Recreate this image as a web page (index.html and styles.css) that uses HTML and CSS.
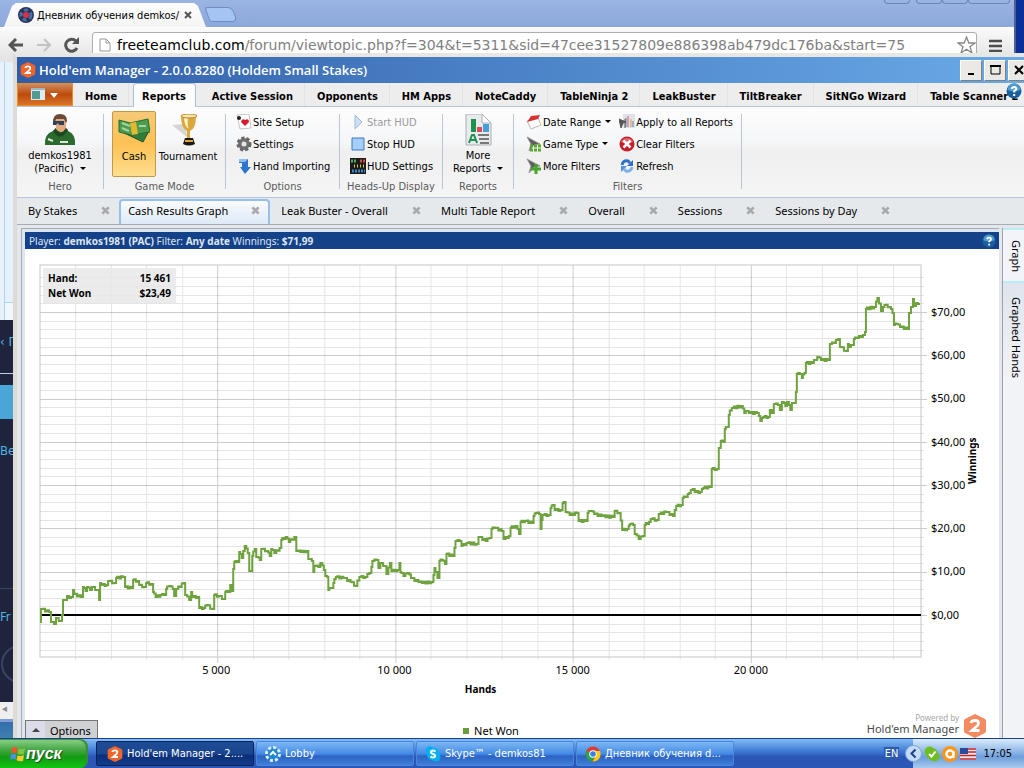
FILE: index.html
```html
<!DOCTYPE html>
<html lang="ru">
<head>
    <meta charset="UTF-8">
    <meta name="viewport" content="width=device-width, initial-scale=1.0">
    <title>Hold'em Manager</title>
    <link rel="stylesheet" href="styles.css">
</head>
<body>

<!-- Shared symbols -->
<svg class="defs" width="0" height="0" aria-hidden="true">
    <symbol id="hm-logo" viewBox="0 0 24 24">
        <path d="M12 0 L22 5 Q23 6 23 7 V17 Q23 18 22 19 L12 24 L2 19 Q1 18 1 17 V7 Q1 6 2 5 Z" fill="#f1642a"/>
        <path d="M8 9 Q8.500 6.500 12 6.500 Q15.500 6.500 15.500 9.300 Q15.500 11 13 13 L9 16.500 H16.500" fill="none" stroke="#fff" stroke-width="2.800"/>
    </symbol>
    <symbol id="help" viewBox="0 0 16 16">
        <circle cx="8" cy="8" r="7.500" fill="#1b5f9e"/>
        <path d="M1.500 7 A6.500 6.500 0 0 1 14.500 7 Q8 10 1.500 7" fill="#4f9bd0"/>
        <path d="M5.700 6 Q6 4 8.200 4 Q10.500 4.200 10.300 6 Q10 7.300 8.200 8.200 V9.500 M8.200 11 V13" fill="none" stroke="#fff" stroke-width="2"/>
    </symbol>
    <symbol id="close-x" viewBox="0 0 10 10">
        <path d="M1.500 1.500 L8.500 8.500 M8.500 1.500 L1.500 8.500" stroke="#a9a9a9" stroke-width="3"/>
    </symbol>
    <symbol id="funnel" viewBox="0 0 16 16">
        <path d="M1 1 L14 8 L8 9 L3 15 L5 8 Z" fill="#5d5d5d" stroke="#9a9a9a"/>
    </symbol>
</svg>

<main class="desktop">

    <!-- Browser window -->
    <section class="browser">
        <div class="tab-strip">
            <div class="browser-tab">
                <svg width="16" height="16" viewBox="0 0 16 16"><circle cx="8" cy="8" r="8" fill="#26365c"/><circle cx="8" cy="8" r="5" fill="none" stroke="#4d6ea5" stroke-width="3" stroke-dasharray="4 3"/><circle cx="8" cy="8" r="3" fill="#d8304f"/></svg>
                <span class="browser-tab-title">Дневник обучения demkos/</span>
                <button class="plain" aria-label="Close tab"><svg width="8" height="8" viewBox="0 0 8 8"><path d="M1 1 L7 7 M7 1 L1 7" stroke="#555" stroke-width="2"/></svg></button>
            </div>
            <button class="new-tab" aria-label="New tab"></button>
            <div class="browser-controls"><i></i><i></i><i></i><i></i></div>
        </div>
        <div class="toolbar">
            <button class="plain" aria-label="Back"><svg width="16" height="14" viewBox="0 0 16 14"><path d="M15 7 H2 M8 1 L2 7 L8 13" fill="none" stroke="#555" stroke-width="3"/></svg></button>
            <button class="plain" aria-label="Forward"><svg width="16" height="14" viewBox="0 0 16 14"><path d="M1 7 H14 M8 1 L14 7 L8 13" fill="none" stroke="#c2c2c2" stroke-width="2"/></svg></button>
            <button class="plain" aria-label="Reload"><svg width="16" height="16" viewBox="0 0 16 16"><path d="M13 11 A6 6 0 1 1 12 4" fill="none" stroke="#555" stroke-width="3"/><path d="M15 0 V7 H8 Z" fill="#555"/></svg></button>
            <div class="address">
                <svg width="12" height="14" viewBox="0 0 12 14"><path d="M1 1 H7 L11 5 V13 H1 Z M7 1 V5 H11" fill="#fff" stroke="#999"/></svg>
                <span class="url"><b>freeteamclub.com</b>/forum/viewtopic.php?f=304&amp;t=5311&amp;sid=47cee31527809e886398ab479dc176ba&amp;start=75</span>
                <svg width="19" height="18" viewBox="0 0 19 18"><path d="M9.500 1 L11.800 7 H18 L13 10.800 L15 17 L9.500 13.200 L4 17 L6 10.800 L1 7 H7.200 Z" fill="#fff" stroke="#888" stroke-width="1.300"/></svg>
            </div>
            <button class="plain" aria-label="Menu"><svg width="13" height="13" viewBox="0 0 13 13"><path d="M0 2 H13 M0 7 H13 M0 12 H13" stroke="#4d4d4d" stroke-width="2.600"/></svg></button>
        </div>
        <div class="page">
            <div class="page-top"></div>
            <div class="page-nav">‹ П</div>
            <div class="page-block"></div>
            <div class="page-text">Be</div>
            <div class="page-text page-low">Fr</div>
            <svg class="page-ring" width="40" height="40" viewBox="0 0 40 40"><circle cx="20" cy="20" r="18" fill="none" stroke="#3b4264" stroke-width="2"/></svg>
        </div>
        <div class="page-scroll">◂</div>
    </section>

    <!-- Hold'em Manager window -->
    <section class="hm">
        <header class="titlebar">
            <svg width="16" height="16"><use href="#hm-logo"/></svg>
            <h1>Hold'em Manager - 2.0.0.8280 (Holdem Small Stakes)</h1>
            <button class="win-btn" aria-label="Minimize"><svg width="12" height="12"><path d="M3 10 H9" stroke="#000" stroke-width="2"/></svg></button>
            <button class="win-btn" aria-label="Maximize"><svg width="12" height="12"><path d="M2 2 H11 V10 H2 Z" fill="none" stroke="#000"/><path d="M1 2 H12" stroke="#000" stroke-width="2"/></svg></button>
            <button class="win-btn" aria-label="Close"><svg width="12" height="12"><path d="M2 2 L10 10 M10 2 L2 10" stroke="#000" stroke-width="2"/></svg></button>
        </header>

        <nav class="ribbon-tabs">
            <button class="app-btn" aria-label="Application menu">
                <svg width="28" height="13" viewBox="0 0 28 13"><path d="M0 0 H14 V12 H0 Z" fill="#dfeaf0"/><path d="M1 3 H9 V11 H1 Z" fill="#4f9a93"/><path d="M0 1 H14" stroke="#9fb5c4" stroke-width="2"/><path d="M19 5 H27 L23 10 Z" fill="#fff"/></svg>
            </button>
            <a href="#">Home</a>
            <a href="#" class="active">Reports</a>
            <a href="#">Active Session</a>
            <a href="#">Opponents</a>
            <a href="#">HM Apps</a>
            <a href="#">NoteCaddy</a>
            <a href="#">TableNinja 2</a>
            <a href="#">LeakBuster</a>
            <a href="#">TiltBreaker</a>
            <a href="#">SitNGo Wizard</a>
            <a href="#">Table Scanner 2</a>
            <svg class="help-badge" width="16" height="16"><use href="#help"/></svg>
        </nav>

        <div class="ribbon">
            <div class="group">
                <button class="big">
                    <svg width="32" height="32" viewBox="0 0 32 32">
                        <path d="M1 31 Q0 20 9 17 L13 13 H21 L24 17 Q32 20 31 31 Z" fill="#2c6a2e"/>
                        <path d="M9 17 Q16 29 24 16 L21 13 H13 Z" fill="#1c4a20"/>
                        <path d="M11 4 H22 V14 Q17 22 12 15 Z" fill="#e2a982"/>
                        <path d="M9 8 Q9 0 16 0 Q23 0 23 7 L22 9 L20 5 H12 L11 9 Z" fill="#6b4a38"/>
                        <path d="M9 7 H20 V11 H15 L14 9 L12 11 H9 Z" fill="#2e4257"/>
                        <path d="M4 25 L9 27 M16 28 H24" stroke="#dfe8dc" stroke-width="2"/>
                    </svg>
                    <span>demkos1981<br>(Pacific) <i class="caret"></i></span>
                </button>
                <h2>Hero</h2>
            </div>
            <div class="group">
                <div class="pair">
                    <button class="big picked">
                        <svg width="32" height="32" viewBox="0 0 32 32">
                            <path d="M2 17 L25 13 L31 17 L25 28 Z" fill="#2f7d38" stroke="#1e5526"/>
                            <path d="M1 6 L12 9 L30 5 L32 18 L13 21 L1 18 Z" fill="#4b9b50" stroke="#256c2d"/>
                            <path d="M4 9 L12 12 M4 14 L11 17 M21 12 H28" stroke="#a5d6a0" stroke-width="2"/>
                            <path d="M12 9 L18 8 L20 20 L14 21 Z" fill="#e5b72f"/>
                        </svg>
                        <span>Cash</span>
                    </button>
                    <button class="big">
                        <svg width="32" height="32" viewBox="0 0 32 32">
                            <path d="M0 11 L12 10 L16 24 Z" fill="#d6d6d6"/>
                            <path d="M9 2 H24 Q24 15 18 17 V24 H15 V17 Q9 14 9 2 Z" fill="#d9a93f"/>
                            <path d="M12 3 H16 Q15 12 17 15 Q12 12 12 3 Z" fill="#fff2c0"/>
                            <ellipse cx="17" cy="2" rx="8" ry="2" fill="#f8e7ad" stroke="#b6862b"/>
                            <path d="M13 24 H21 L23 30 Q17 33 11 30 Z" fill="#1d1710"/><path d="M13 27 H21" stroke="#d9a93f" stroke-width="2"/>
                        </svg>
                        <span>Tournament</span>
                    </button>
                </div>
                <h2>Game Mode</h2>
            </div>
            <div class="group">
                <div class="stack">
                    <button class="small"><svg width="16" height="16" viewBox="0 0 16 16"><path d="M1 1 L13 0 L15 14 L4 15 Z" fill="#fff" stroke="#c5c5c5"/><path d="M9 12 L5 8 Q6 4 9 6 Q13 4 13 8 Z" fill="#d8182a"/><circle cx="3" cy="4" r="2" fill="#222"/></svg>Site Setup</button>
                    <button class="small"><svg width="16" height="16" viewBox="0 0 16 16"><circle cx="8" cy="8" r="6" fill="#777" stroke="#666" stroke-width="3" stroke-dasharray="3 2"/><circle cx="8" cy="8" r="5" fill="#6f6f6f"/><circle cx="8" cy="8" r="2.500" fill="#e6e6e6"/></svg>Settings</button>
                    <button class="small"><svg width="16" height="16" viewBox="0 0 16 16"><path d="M3 1 H12 V9 H15 L9 16 L4 9 H6 V5 H3 Z" fill="#2f74cf"/><path d="M3 1 H12 L9 4 H3 Z" fill="#8fbdf0"/></svg>Hand Importing</button>
                </div>
                <h2>Options</h2>
            </div>
            <div class="group">
                <div class="stack">
                    <button class="small" disabled><svg width="16" height="16" viewBox="0 0 16 16"><path d="M5 1 L12 8 L5 15 Z" fill="#cfe0f3" stroke="#9cbce0"/></svg>Start HUD</button>
                    <button class="small"><svg width="16" height="16" viewBox="0 0 16 16"><path d="M2 2 H14 V14 H2 Z" fill="#a5cff8" stroke="#3d78bb"/></svg>Stop HUD</button>
                    <button class="small"><svg width="16" height="16" viewBox="0 0 16 16"><path d="M0 0 H16 V16 H0 Z" fill="#1b1b1b"/><path d="M1 3 H7" stroke="#4fae55" stroke-width="3" stroke-dasharray="2 1"/><path d="M10 3 H15" stroke="#d8434b" stroke-width="3" stroke-dasharray="2 1"/><path d="M4 8 H14" stroke="#d8c73e" stroke-width="3" stroke-dasharray="1 2"/><path d="M2 13 H15" stroke="#3786c5" stroke-width="3" stroke-dasharray="2 1"/></svg>HUD Settings</button>
                </div>
                <h2>Heads-Up Display</h2>
            </div>
            <div class="group">
                <button class="big">
                    <svg width="32" height="32" viewBox="0 0 32 32">
                        <path d="M4 0 H20 L29 9 V31 H4 Z" fill="#e8ebec" stroke="#a9b0b3"/>
                        <path d="M20 0 V9 H29 Z" fill="#fff" stroke="#a9b0b3"/>
                        <path d="M9 5 H14 V18 H9 Z" fill="#1f9050"/><path d="M15 13 H20 V18 H15 Z" fill="#dd4b52"/><path d="M21 10 H27 V18 H21 Z" fill="#4a9bd9"/>
                        <path d="M7 29 L10 21 H12 L15 29 M9 26 H13" fill="none" stroke="#1f9050" stroke-width="2"/>
                        <path d="M16 21 H27 M17 25 H27 M18 29 H27" stroke="#777" stroke-width="2"/>
                    </svg>
                    <span>More<br>Reports <i class="caret"></i></span>
                </button>
                <h2>Reports</h2>
            </div>
            <div class="group">
                <div class="pair filters">
                    <div class="stack">
                        <button class="small"><svg width="16" height="16" viewBox="0 0 16 16"><path d="M1 7 L12 4 L15 11 L5 15 Z" fill="#fff" stroke="#b9b9b9"/><path d="M1 8 L5 2 L14 1 L12 5 Z" fill="#d93232"/></svg>Date Range <i class="caret"></i></button>
                        <button class="small"><svg width="16" height="16"><use href="#funnel"/><path d="M4 10 H16 M4 14 H16" stroke="#5aa832" stroke-width="3" stroke-dasharray="3 1"/></svg>Game Type <i class="caret"></i></button>
                        <button class="small"><svg width="16" height="16"><use href="#funnel"/><path d="M10 6 V16 M5 11 H15" stroke="#47a72c" stroke-width="3"/></svg>More Filters</button>
                    </div>
                    <div class="stack">
                        <button class="small"><svg width="16" height="16" viewBox="0 0 16 16"><path d="M4 0 H16 V14 H4 Z" fill="#dfe3e8"/><path d="M7 4 V13 M14 7 V13" stroke="#5b7fb8"/><path d="M9 2 V13" stroke="#d8555c"/><path d="M12 5 V13" stroke="#d8a13c"/><path d="M0 5 L7 8 L4 9 L2 14 Z M6 5 V14" fill="#555" stroke="#555"/></svg>Apply to all Reports</button>
                        <button class="small"><svg width="16" height="16" viewBox="0 0 16 16"><circle cx="8" cy="8" r="7.500" fill="#c61e28"/><path d="M2 6 A6.500 6.500 0 0 1 14 6 Q8 9 2 6" fill="#e0626a"/><path d="M4.500 4.500 L11.500 11.500 M11.500 4.500 L4.500 11.500" stroke="#fff" stroke-width="2.500"/></svg>Clear Filters</button>
                        <button class="small"><svg width="16" height="16" viewBox="0 0 16 16"><path d="M3 7 Q4 2 9 3 L11 5" fill="none" stroke="#2f6fca" stroke-width="3"/><path d="M14 2 V8 H8 Z" fill="#2f6fca"/><path d="M13 9 Q12 14 7 13 L5 11" fill="none" stroke="#7fb0ea" stroke-width="3"/><path d="M2 14 V8 H8 Z" fill="#5390dc"/></svg>Refresh</button>
                    </div>
                </div>
                <h2>Filters</h2>
            </div>
        </div>

        <nav class="doc-tabs">
            <div class="doc-tab"><a href="#">By Stakes</a><button class="plain" aria-label="Close"><svg width="9" height="9"><use href="#close-x"/></svg></button></div>
            <div class="doc-tab current"><a href="#">Cash Results Graph</a><button class="plain" aria-label="Close"><svg width="9" height="9"><use href="#close-x"/></svg></button></div>
            <div class="doc-tab"><a href="#">Leak Buster - Overall</a><button class="plain" aria-label="Close"><svg width="9" height="9"><use href="#close-x"/></svg></button></div>
            <div class="doc-tab"><a href="#">Multi Table Report</a><button class="plain" aria-label="Close"><svg width="9" height="9"><use href="#close-x"/></svg></button></div>
            <div class="doc-tab"><a href="#">Overall</a><button class="plain" aria-label="Close"><svg width="9" height="9"><use href="#close-x"/></svg></button></div>
            <div class="doc-tab"><a href="#">Sessions</a><button class="plain" aria-label="Close"><svg width="9" height="9"><use href="#close-x"/></svg></button></div>
            <div class="doc-tab"><a href="#">Sessions by Day</a><button class="plain" aria-label="Close"><svg width="9" height="9"><use href="#close-x"/></svg></button></div>
        </nav>

        <div class="workspace">
            <article class="report">
                <div class="filter-bar">
                    <p>Player: <b>demkos1981 (PAC)</b> Filter: <b>Any date</b> Winnings: <b>$71,99</b></p>
                    <svg width="14" height="14" viewBox="0 0 16 16"><use href="#help" width="16" height="16"/></svg>
                </div>
                <div class="chart">
                    <div class="plot">
                        <svg id="plot" viewBox="40 265 880 392" preserveAspectRatio="none"></svg>
                        <dl class="readout">
                            <dt>Hand:</dt><dd>15 461</dd>
                            <dt>Net Won</dt><dd>$23,49</dd>
                        </dl>
                    </div>
                    <div class="y-axis">
                        <span></span><span>$70,00</span><span>$60,00</span><span>$50,00</span><span>$40,00</span><span>$30,00</span><span>$20,00</span><span>$10,00</span><span>$0,00</span>
                    </div>
                    <div class="y-title">Winnings</div>
                    <div class="x-axis"><span></span><span>5 000</span><span>10 000</span><span>15 000</span><span>20 000</span></div>
                    <div class="x-title">Hands</div>
                </div>
                <footer class="report-foot">
                    <button class="options"><i><svg width="8" height="4"><path d="M0 4 L4 0 L8 4 Z" fill="#444"/></svg></i><span>Options</span></button>
                    <div class="legend"><i></i>Net Won</div>
                    <div class="powered">
                        <p><small>Powered by</small>Hold'em Manager</p>
                        <svg width="24" height="24" opacity="0.750"><use href="#hm-logo"/></svg>
                    </div>
                </footer>
            </article>
            <nav class="side-tabs">
                <a href="#" class="on">Graph</a>
                <a href="#">Graphed Hands</a>
            </nav>
        </div>
    </section>
</main>

<footer class="taskbar">
    <button class="start">
        <svg width="16" height="16" viewBox="0 0 16 16"><path d="M2 2 Q5 0 7.500 2 L6.500 7.500 Q4 6 1 7 Z" fill="#f0562b"/><path d="M8.500 2.500 Q12 4 15 2 L14 8 Q11 9 7.500 8 Z" fill="#83c441"/><path d="M1 8.500 Q4 7 6.500 9 L5.500 14 Q3 12 0 13.500 Z" fill="#4a8fe8"/><path d="M7.500 9.500 Q11 10.500 14 9 L13 15 Q9 16 6.500 14 Z" fill="#fbc92e"/></svg>
        пуск
    </button>
    <button class="task pressed"><svg width="16" height="16"><use href="#hm-logo"/></svg>Hold'em Manager - 2....</button>
    <button class="task"><svg width="16" height="16" viewBox="0 0 16 16"><circle cx="8" cy="8" r="6.500" fill="#1f86cf" stroke="#d7efff" stroke-width="3" stroke-dasharray="3 2"/><circle cx="8" cy="8" r="5" fill="#1f86cf"/><path d="M5 9 L8 6 L11 9" fill="none" stroke="#fff" stroke-width="2"/></svg>Lobby</button>
    <button class="task"><svg width="16" height="16" viewBox="0 0 16 16"><circle cx="5" cy="5" r="4.500" fill="#00aff0"/><circle cx="11" cy="11" r="4.500" fill="#00aff0"/><circle cx="8" cy="8" r="6.500" fill="#00aff0"/><path d="M10.500 5.500 Q8 3.500 6 5.500 Q5.500 7.200 8 8 Q11 9 10 10.700 Q8 12.500 5.500 10.500" fill="none" stroke="#fff" stroke-width="2"/></svg>Skype™ - demkos81</button>
    <button class="task"><svg width="16" height="16" viewBox="0 0 16 16"><circle cx="8" cy="8" r="7.500" fill="#e03c31"/><path d="M1.500 4.500 A7.500 7.500 0 0 0 7 15.500 L11 9 L8 8 Z" fill="#2ba24c"/><path d="M15 5 H8 L11 10 L7.500 15.500 A7.500 7.500 0 0 0 15 5" fill="#fbc814"/><circle cx="8" cy="8" r="3.800" fill="#fff"/><circle cx="8" cy="8" r="2.800" fill="#3b7de0"/></svg>Дневник обучения d...</button>
    <span class="lang">EN</span>
    <div class="tray">
        <svg width="17" height="17" viewBox="0 0 17 17"><circle cx="8.500" cy="8.500" r="8" fill="#c4daf6" stroke="#7ba4d8"/><path d="M10.500 4.500 L6.500 8.500 L10.500 12.500" fill="none" stroke="#1f3f80" stroke-width="2"/></svg>
        <svg width="16" height="16" viewBox="0 0 16 16"><circle cx="5.500" cy="5.500" r="5" fill="#6fbe20"/><circle cx="10.500" cy="10.500" r="5" fill="#6fbe20"/><circle cx="8" cy="8" r="6" fill="#6fbe20"/><path d="M5 8 L7.500 10.500 L11.500 5.500" fill="none" stroke="#fff" stroke-width="2"/></svg>
        <svg width="16" height="16" viewBox="0 0 16 16"><circle cx="8" cy="8" r="8" fill="#f7951d"/><circle cx="8" cy="8" r="3.500" fill="none" stroke="#fff" stroke-width="2.400"/><path d="M11.500 5 V12" stroke="#fff" stroke-width="2"/></svg>
        <svg width="16" height="12" viewBox="0 0 16 12"><path d="M0 0 H16 V12 H0 Z" fill="#f2e6e6"/><path d="M0 1 H16 M0 4 H16 M0 7.500 H16 M0 11 H16" stroke="#c3262f" stroke-width="1.700"/><path d="M0 0 H8 V6 H0 Z" fill="#2b4a9b"/></svg>
        <time>17:05</time>
    </div>
</footer>

<script>
    const svg = document.getElementById('plot');
    const left = 40, right = 920, top_ = 265, bottom = 657, zero = 615;
    const perTwo = 8.66;       // height of $2
    const perThousand = 35.5;  // width of 1 000 hands

    // x,y of each turn in the winnings line
    const turns = `41,623 41,612 43,609 51,612 52,622 56,624 57,618 62,621 63,615 63,602 67,600 67,597 73,597 74,590 75,594 83,597 84,587 87,591 88,587 92,590 93,587 99,590 100,600 101,583 103,585 108,585 110,581 116,583 117,578 125,577 126,587 133,588 134,580 139,581 140,585 146,587 147,583 153,584 154,592 157,597 162,595 166,595 167,589 171,586 174,589 176,596 178,589 185,583 187,595 191,600 192,592 194,597 199,597 200,608 205,608 208,605 214,609 215,595 220,596 225,599 226,592 230,592 232,585 233,591 234,569 235,562 239,562 240,552 243,558 246,546 249,553 250,571 252,571 253,556 256,549 258,557 261,560 263,549 268,551 271,556 272,549 276,553 281,548 282,540 287,537 290,542 296,537 298,551 302,552 308,551 310,559 313,561 314,572 316,566 320,567 322,563 325,570 327,576 328,577 329,590 333,588 334,583 337,577 345,578 352,582
        357,586 361,577 367,577 371,573 372,567 374,561 378,560 380,568 381,563 386,566 388,574 391,563 393,571 399,570 400,563 401,572 405,576 409,573 412,578 420,582 423,583 433,582 434,575 435,568 439,578 440,561 443,560 446,564 447,554 454,556 455,548 457,541 461,541 462,546 468,543 478,544 480,537 487,541 491,538 492,529 496,528 503,531 505,539 510,536 511,528 517,526 520,534 521,522 526,521 533,523 534,516 537,513 540,514 541,529 542,520 544,515 550,515 551,508 554,505 556,510 562,510 563,503 565,502 567,512 571,515 578,513 579,521 587,521 588,513 592,511 595,514 603,516 614,517 615,511 620,513 623,530 628,529 631,524 634,525 636,534 640,539 644,536 645,525 650,522 652,519 658,520 660,514
        667,512 674,516 677,506 682,505 683,498 687,497 690,493 694,489 696,492 701,492 704,488 711,487 712,469 718,469 720,448 721,441 724,442 725,429 728,427 729,415 733,408 742,406 745,413 748,411 750,413 758,413 761,421 764,417 769,417 771,410 773,413 775,404 779,405 781,410 783,402 786,406 788,402 791,410 793,403 795,403 796,392 797,374 801,374 802,378 805,373 806,363 813,363 818,357 822,360 829,360 831,344 835,343 839,339 841,347 847,351 848,344 850,347 853,345 854,339 858,338 864,335 865,332 866,309 875,307 878,298 882,311 885,305 890,307 893,313 894,325 897,324 901,327 908,329 910,313 912,307 913,299 915,306 917,303 919,304`;

    function addPath(d, cls) {
        const path = document.createElementNS('http://www.w3.org/2000/svg', 'path');
        path.setAttribute('d', d);
        path.setAttribute('class', cls);
        svg.appendChild(path);
    }

    let minor = '', major = '';
    for (let i = -4; i < 40; i++) {
        const y = Math.round(zero - i * perTwo) + 0.5;
        if (i % 5 === 0) {
            major += `M${left} ${y} H${right + 6}`;
        } else {
            minor += `M${left} ${y} H${right + 3}`;
        }
    }
    for (let i = 1; i < 25; i++) {
        const x = Math.floor(left + i * perThousand) + 0.5;
        if (i % 5 === 0) {
            major += `M${x} ${top_} V${bottom + 6}`;
        } else {
            minor += `M${x} ${top_} V${bottom + 3}`;
        }
    }
    addPath(minor, 'grid-minor');
    addPath(major, 'grid-major');
    addPath(`M${left} ${top_} H${right} V${bottom} H${left} Z`, 'grid-frame');
    addPath(`M${left} ${zero} H${right}`, 'zero-line');

    let line = '';
    turns.split(/\s+/).forEach((turn, i, all) => {
        const [x, y] = turn.split(',').map(Number);
        if (i === 0) {
            line = `M${x} ${y}`;
            return;
        }
        const [px, py] = all[i - 1].split(',').map(Number);
        const steps = Math.max(1, Math.round((x - px) / 2));
        for (let s = 1; s <= steps; s++) {
            const wobble = s < steps ? (s % 2 ? -1 : 1) : 0;
            line += ` V${py + (y - py) * s / steps + wobble} H${px + (x - px) * s / steps}`;
        }
    });
    addPath(line, 'series');
</script>

</body>
</html>
```
FILE: styles.css
```css
* {
    box-sizing: border-box;
}
body {
    margin: 0;
    height: 100vh;
    display: flex;
    flex-direction: column;
    overflow: hidden;
    font-family: "DejaVu Sans Condensed", "Open Sans", sans-serif;
    font-size: 11px;
    color: #000;
}
button {
    font: inherit;
    color: inherit;
    padding: 0;
    border: none;
    background: none;
}
a {
    color: inherit;
    text-decoration: none;
}
h1, h2, p, dl, dd {
    margin: 0;
}
svg {
    flex: none;
    display: block;
}
.defs {
    position: absolute;
}
.plain {
    display: flex;
}
.desktop {
    position: relative;
    flex: 1;
    min-height: 0;
    overflow: hidden;
    background: linear-gradient(#0a2f96 0 90%, #3f7fb0);
}

/* Browser */
.browser {
    position: absolute;
    top: 0;
    left: 0;
    right: 8px;
    bottom: 16px;
    display: flex;
    flex-direction: column;
    border-right: 2px solid #4b5f92;
    border-bottom: 3px solid #7f9bd8;
    background: linear-gradient(#9ab4e3, #8ca7da 27px);
}
.tab-strip {
    display: flex;
    align-items: flex-start;
    height: 27px;
    padding-left: 4px;
}
.browser-tab {
    display: flex;
    align-items: center;
    gap: 3px;
    width: 202px;
    height: 24px;
    margin-top: 3px;
    padding: 0 14px 0 14px;
    clip-path: polygon(0 100%, 8px 3px, 12px 0, 190px 0, 194px 3px, 100% 100%);
    background: linear-gradient(#fff, #f4f4f4);
}
.browser-tab-title {
    flex: 1;
    white-space: nowrap;
}
.new-tab {
    width: 28px;
    height: 15px;
    margin: 7px 0 0 1px;
    border: 1px solid #6f8fc4;
    border-radius: 3px 5px 5px 3px;
    background: #a5c3f3;
    transform: skewX(20deg);
}
.browser-controls {
    display: flex;
    margin-left: auto;
    margin-right: 4px;
}
.browser-controls i {
    width: 26px;
    height: 4px;
    border: 1px solid #7185b0;
    border-top: none;
    border-radius: 0 0 4px 4px;
}
.browser-controls i:first-child {
    margin-right: 6px;
}
.browser-controls i:last-child {
    width: 42px;
}
.toolbar {
    display: flex;
    align-items: center;
    gap: 12px;
    height: 35px;
    padding: 0 12px 0 8px;
    border-top: 1px solid #fff;
    background: linear-gradient(#fafafa, #e2e2e2);
}
.address {
    flex: 1;
    min-width: 0;
    display: flex;
    align-items: center;
    gap: 6px;
    height: 27px;
    padding: 0 0 0 6px;
    border: 1px solid #adadad;
    border-radius: 3px;
    background: #fff;
}
.url {
    flex: 1;
    font-family: "DejaVu Sans", sans-serif;
    font-size: 14px;
    white-space: nowrap;
    overflow: hidden;
    color: #808080;
}
.url b {
    font-weight: normal;
    color: #000;
}
.page {
    flex: 1;
    min-height: 0;
    overflow: hidden;
    background: #1f243d;
    color: #4fb4e0;
    font-size: 13px;
}
.page-top {
    height: 258px;
    margin-left: 4px;
    border-left: 1px solid #a9d6f5;
    background: linear-gradient(#e6f1fb 240px, #a9d6f5 240px 241px, #f1f7fd 241px);
    box-shadow: -4px 0 #e6f1fb;
}
.page-nav {
    height: 54px;
    padding-top: 14px;
    border-bottom: 1px solid #bcd0e6;
}
.page-block {
    width: 60px;
    height: 34px;
    margin: 11px 0 24px;
    background: #4ba6d8;
}
.page-text {
    margin-bottom: 130px;
}
.page-low {
    margin-bottom: 20px;
    padding-top: 20px;
    border-top: 1px solid #3b4264;
}
.page-scroll {
    height: 17px;
    padding-left: 2px;
    background: #efefef;
    color: #888;
}

/* Hold'em Manager window */
.hm {
    position: absolute;
    top: 53px;
    left: 13px;
    right: -8px;
    bottom: 0;
    display: flex;
    flex-direction: column;
    border-top: 4px solid #e9e7e2;
    border-left: 4px solid #dedbd5;
    background: #eceef2;
}
.titlebar {
    display: flex;
    align-items: center;
    gap: 2px;
    height: 26px;
    padding: 0 2px 0 3px;
    background: linear-gradient(90deg, #2f5da8, #6aaae8);
    color: #fff;
}
.titlebar h1 {
    flex: 1;
    padding-left: 1px;
    font-family: "Open Sans", sans-serif;
    font-size: 13px;
    font-weight: 600;
    white-space: nowrap;
}
.win-btn {
    display: grid;
    place-items: center;
    width: 22px;
    height: 21px;
    border: 1px solid;
    border-color: #fff #808080 #808080 #fff;
    background: #ece9e4;
}
.ribbon-tabs {
    position: relative;
    display: flex;
    height: 24px;
    border-bottom: 1px solid #b5c6dc;
    background: #ededed;
}
.ribbon-tabs a {
    padding: 7px 11px 0 12px;
    border-right: 1px solid #e0e3e8;
    font-weight: bold;
    white-space: nowrap;
}
.ribbon-tabs .active {
    padding: 6px 9px 0 8px;
    margin: 0 4px -1px 4px;
    border: 1px solid #a9c0dd;
    border-bottom: none;
    border-radius: 4px 4px 0 0;
    background: #fcfcfd;
}
.app-btn {
    flex: none;
    display: grid;
    place-items: center;
    width: 56px;
    height: 23px;
    border: 1px solid #ef8a1c;
    background: linear-gradient(#d08a5c, #bd4c0b 50%, #d8742c);
}
.help-badge {
    position: absolute;
    top: 0;
    right: 10px;
}
.ribbon {
    display: grid;
    grid-template-columns: 87px 122px 114px 103px 71px 228px;
    height: 90px;
    padding-top: 4px;
    background: linear-gradient(#fdfdfe, #f5f6f7 40%, #efeff0 50%, #f5f5f6);
}
.group {
    display: flex;
    flex-direction: column;
    align-items: center;
    margin: 3px 0 8px;
    border-right: 1px solid #b7c6d8;
    white-space: nowrap;
}
.group h2 {
    margin: auto 0 -4px;
    font-size: 11px;
    font-weight: normal;
    line-height: 13px;
    color: #5b5b5b;
}
.pair, .stack {
    display: flex;
}
.stack {
    flex-direction: column;
    gap: 6px;
    align-self: flex-start;
    padding-left: 10px;
}
.filters .stack {
    padding-left: 12px;
}
.filters .stack + .stack {
    padding-left: 8px;
}
.pair {
    align-self: flex-start;
}
.big {
    display: flex;
    flex-direction: column;
    align-items: center;
    gap: 3px;
    line-height: 13px;
}
.pair .big {
    gap: 4px;
    width: 62px;
}
.pair .picked {
    width: 44px;
    height: 66px;
    margin: -3px 1px 0 8px;
    padding-top: 2px;
    border: 1px solid #c19a45;
    border-radius: 2px;
    background: linear-gradient(#f6c877, #fdc155 50%, #fedf90);
}
.small {
    display: flex;
    align-items: center;
    gap: 1px;
    height: 16px;
}
.small:disabled {
    color: #9a9a9a;
}
.caret {
    display: inline-block;
    margin: 0 0 2px 3px;
    border: 3px solid transparent;
    border-top-color: #000;
    border-bottom: none;
}
.doc-tabs {
    display: flex;
    height: 28px;
    padding-top: 1px;
    border-top: 1px solid #b5c6dc;
    border-bottom: 1px solid #a8adb3;
    background: #e6e9ec;
    font-family: "Noto Sans", sans-serif;
}
.doc-tab {
    display: flex;
    align-items: center;
    gap: 24px;
    padding: 0 9px 2px 11px;
    white-space: nowrap;
}
.current {
    gap: 23px;
    padding: 0 8px 4px 7px;
    border: 2px solid #94c1ec;
    border-bottom: none;
    border-radius: 4px 4px 0 0;
    background: linear-gradient(#f9fbfe, #dfe9f7);
}
.workspace {
    flex: 1;
    min-height: 0;
    display: flex;
    gap: 3px;
    padding: 3px 0 0 4px;
    background: #e4e7ee;
}
.report {
    flex: 1;
    min-width: 0;
    display: flex;
    flex-direction: column;
    border: 1px solid #a8adb3;
    border-width: 1px 0 0 1px;
    padding: 3px 0 0 3px;
    background: #fff;
    box-shadow: inset 3px 3px #dfe5ef;
}
.filter-bar {
    display: flex;
    justify-content: space-between;
    align-items: center;
    height: 17px;
    padding: 0 3px 0 4px;
    background: #154189;
    color: #dce6f5;
    font-family: "Noto Sans", sans-serif;
    font-size: 10px;
}
.chart {
    flex: 1;
    min-height: 0;
    display: grid;
    grid-template-columns: 1fr 44px 34px;
    grid-template-rows: 1fr 26px 14px;
    padding: 16px 0 0 15px;
    font-family: "Noto Sans", sans-serif;
}
.plot {
    position: relative;
    min-height: 0;
}
.plot > svg {
    position: absolute;
    width: 100%;
    height: 100%;
    overflow: visible;
}
.plot path {
    fill: none;
    vector-effect: non-scaling-stroke;
}
.grid-minor {
    stroke: rgba(0, 0, 0, 0.1);
}
.grid-major {
    stroke: rgba(0, 0, 0, 0.2);
}
.grid-frame {
    stroke: #c6c6c6;
}
.zero-line {
    stroke: #000;
    stroke-width: 2px;
}
.plot .series {
    stroke: #6fa340;
    stroke-width: 2px;
}
.readout {
    position: absolute;
    top: 3px;
    left: 3px;
    display: grid;
    grid-template-columns: 1fr auto;
    align-content: center;
    width: 133px;
    height: 35px;
    padding: 0 5px;
    background: rgba(232, 232, 232, 0.85);
    font-size: 10px;
    font-weight: bold;
    line-height: 15px;
}
.readout dd {
    text-align: right;
}
.y-axis {
    display: grid;
    grid-template-rows: 250fr repeat(8, 433fr) 206fr;
    align-items: center;
    padding-left: 10px;
}
.y-axis span {
    line-height: 14px;
}
.y-title {
    writing-mode: vertical-rl;
    transform: rotate(180deg);
    text-align: center;
    line-height: 14px;
    font-size: 10px;
    font-weight: bold;
    padding-left: 16px;
}
.x-axis {
    grid-column: 1;
    display: grid;
    grid-template-columns: 87fr repeat(4, 178fr) 81fr;
    padding-top: 5px;
    text-align: center;
}
.x-title {
    grid-column: 1;
    grid-row: 3;
    line-height: 12px;
    text-align: center;
    font-size: 10px;
    font-weight: bold;
}
.report-foot {
    display: grid;
    grid-template-columns: 1fr auto 1fr;
    align-items: end;
    height: 41px;
}
.options {
    display: flex;
    width: 73px;
    height: 18px;
    border: 1px solid #777;
    border-bottom: none;
    background: #d0d1d3;
    font-family: "Noto Sans", sans-serif;
    line-height: 20px;
}
.options i {
    display: grid;
    place-items: center;
    width: 19px;
    height: 17px;
    margin-right: 5px;
    background: #dcdce8;
}
.legend {
    display: flex;
    align-items: center;
    gap: 5px;
    padding-right: 42px;
    font-family: "Noto Sans", sans-serif;
}
.legend i {
    width: 6px;
    height: 6px;
    background: #6a9e3a;
}
.powered {
    display: flex;
    justify-content: flex-end;
    align-items: flex-end;
    gap: 4px;
    padding-right: 12px;
    font-family: "Noto Sans", sans-serif;
    line-height: 12px;
    color: #4a4a4a;
    text-align: right;
}
.powered p {
    padding-bottom: 3px;
}
.powered small {
    display: block;
    font-size: 8px;
    line-height: 10px;
    color: #a8a8a8;
}
.side-tabs {
    display: flex;
    flex-direction: column;
    width: 30px;
    border-left: 1px solid #9da3ab;
    background: linear-gradient(#d5dce8, #f2f3f7 150px);
}
.side-tabs a {
    writing-mode: vertical-rl;
    width: 30px;
    padding: 14px 10px 0 0;
    font-family: "Noto Sans", sans-serif;
    line-height: 14px;
}
.side-tabs .on {
    height: 55px;
    padding-top: 10px;
    border-top: 2px solid #b7eef2;
    border-bottom: 2px solid #b7eef2;
    background: #f2f4f9;
}

/* Taskbar */
.taskbar {
    display: flex;
    align-items: center;
    gap: 2px;
    height: 30px;
    border-top: 1px solid #1d3f8f;
    background: linear-gradient(#82bdf2, #3f7bd6 12px, #2a55b4 18px, #2b57b8);
    color: #fff;
}
.start {
    display: flex;
    align-items: center;
    width: 88px;
    height: 29px;
    margin-right: 6px;
    padding-left: 10px;
    border-radius: 0 8px 8px 0;
    background: linear-gradient(#8ed68b, #4aa84a 10px, #129a12 18px, #12c512);
    box-shadow: inset -2px 1px 1px #3b8a3b;
    font-family: "Liberation Sans", sans-serif;
    font-size: 16px;
    font-weight: bold;
    font-style: italic;
    text-shadow: 1px 1px 1px #1d4d1d;
}
.task {
    display: flex;
    align-items: center;
    gap: 4px;
    flex: 0 1 158px;
    min-width: 0;
    height: 25px;
    padding: 0 8px;
    border: 1px solid #4a86dd;
    border-radius: 2px;
    background: linear-gradient(#7db8f4, #4489e4 12px, #2c62c4 14px, #3f7fd8);
    white-space: nowrap;
    overflow: hidden;
}
.pressed {
    padding-left: 10px;
    border-color: #0a235c;
    background: linear-gradient(#1f4c96, #1a458f 12px, #0b2f78 13px, #123b89);
}
.lang {
    margin-left: auto;
    margin-right: 12px;
    padding: 0 1px;
    background: #2c59ae;
}
.tray {
    display: flex;
    align-items: center;
    gap: 2px;
    height: 29px;
    padding-right: 12px;
    background: linear-gradient(#d9ecfc, #8bb5e6 13px, #6f9edb 18px, #a9cbf0);
    color: #000;
}
.tray svg:first-child {
    margin-left: -8px;
}
.tray time {
    margin-left: 5px;
}
```
